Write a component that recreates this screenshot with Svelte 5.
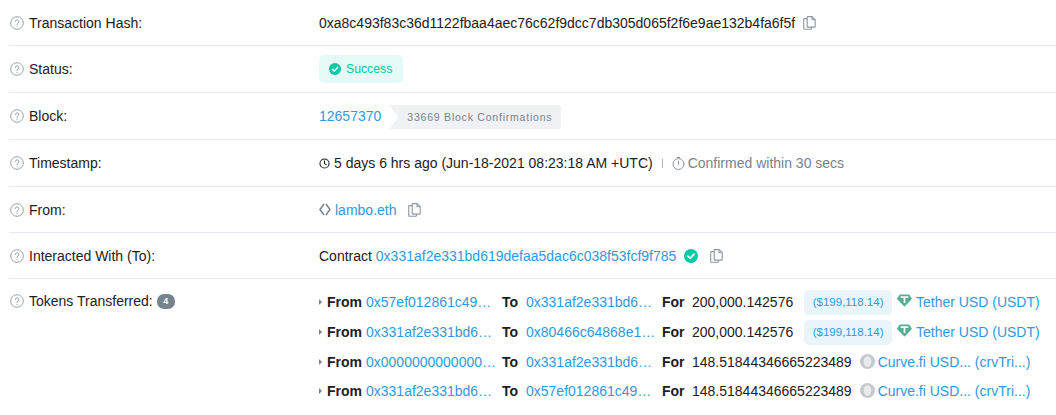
<script lang="ts">
  const transfers = [
    { from: '0x57ef012861c49…', to: '0x331af2e331bd6…', amount: '200,000.142576', usd: '($199,118.14)', token: 'Tether USD (USDT)', kind: 'usdt' },
    { from: '0x331af2e331bd6…', to: '0x80466c64868e1…', amount: '200,000.142576', usd: '($199,118.14)', token: 'Tether USD (USDT)', kind: 'usdt' },
    { from: '0x0000000000000…', to: '0x331af2e331bd6…', amount: '148.51844346665223489', usd: '', token: 'Curve.fi USD... (crvTri...)', kind: 'crv' },
    { from: '0x331af2e331bd6…', to: '0x57ef012861c49…', amount: '148.51844346665223489', usd: '', token: 'Curve.fi USD... (crvTri...)', kind: 'crv' }
  ];
</script>

{#snippet help()}
  <svg class="help" viewBox="0 0 14 14" fill="none" stroke="#8c98a4">
    <circle cx="7" cy="7" r="6.3" stroke-width="0.9" />
    <path d="M5.2 5.6a1.8 1.8 0 1 1 2.7 1.6c-.6.35-.9.7-.9 1.4" stroke-width="0.9" stroke-linecap="round" />
    <circle cx="7" cy="10.3" r="0.55" fill="#8c98a4" stroke="none" />
  </svg>
{/snippet}

{#snippet copy()}
  <svg class="copy" viewBox="0 0 13 14" fill="none" stroke="#8c98a4" stroke-width="1.1" stroke-linejoin="round">
    <path d="M4.2 2.6H1.4a.7.7 0 0 0-.7.7v9.3c0 .4.3.7.7.7h6.4c.4 0 .7-.3.7-.7v-1.4" />
    <path d="M4.2 1.3c0-.4.3-.7.7-.7h4.3l3 3v6.8c0 .4-.3.7-.7.7H4.9a.7.7 0 0 1-.7-.7z" />
    <path d="M9 .8v3h3" />
  </svg>
{/snippet}

{#snippet check(size)}
  <svg class={size} viewBox="0 0 14 14">
    <circle cx="7" cy="7" r="7" fill="#00c9a7" />
    <path d="M3.9 7.2l2.2 2.2 4-4.2" fill="none" stroke="#fff" stroke-width="1.7" stroke-linecap="round" stroke-linejoin="round" />
  </svg>
{/snippet}

<main class="card">
  <div class="row first">
    <div class="label">{@render help()}Transaction Hash:</div>
    <div class="value"><span>0xa8c493f83c36d1122fbaa4aec76c62f9dcc7db305d065f2f6e9ae132b4fa6f5f</span>{@render copy()}</div>
  </div>
  <div class="row">
    <div class="label">{@render help()}Status:</div>
    <div class="value">
      <span class="success">{@render check('check-sm')}Success</span>
    </div>
  </div>
  <div class="row">
    <div class="label">{@render help()}Block:</div>
    <div class="value">
      <a href="#block">12657370</a>
      <span class="confirmations">33669 Block Confirmations</span>
    </div>
  </div>
  <div class="row">
    <div class="label">{@render help()}Timestamp:</div>
    <div class="value">
      <svg class="clock" viewBox="0 0 12 12" fill="none" stroke="#1e2022" stroke-width="1.1" stroke-linecap="round">
        <circle cx="6" cy="6" r="5" />
        <path d="M6 3v3.2l2 1" />
      </svg>
      <span class="time">5 days 6 hrs ago (Jun-18-2021 08:23:18 AM +UTC)</span>
      <span class="sep"></span>
      <svg class="timer" viewBox="0 0 14 14" fill="none" stroke="#77838f" stroke-width="0.9" stroke-linecap="round">
        <circle cx="7" cy="7.6" r="5.9" />
        <path d="M7 4.4v3.4M5.6.6h2.800" />
      </svg>
      <span class="muted">Confirmed within 30 secs</span>
    </div>
  </div>
  <div class="row compact">
    <div class="label">{@render help()}From:</div>
    <div class="value">
      <svg class="ens" viewBox="0 0 12 13" fill="none" stroke="#77838f" stroke-width="1.5">
        <path d="M5 1L1 6.5 5 12M7 1l4 5.500L7 12" />
      </svg>
      <a href="#from" class="ens-name">lambo.eth</a>
      {@render copy()}
    </div>
  </div>
  <div class="row compact">
    <div class="label">{@render help()}Interacted With (To):</div>
    <div class="value">
      <span>Contract&nbsp;</span><a href="#to">0x331af2e331bd619defaa5dac6c038f53fcf9f785</a>
      {@render check('check-lg')}
      {@render copy()}
    </div>
  </div>
  <div class="row tokens">
    <div class="label">{@render help()}Tokens Transferred:<span class="count">4</span></div>
    <div class="transfers">
      {#each transfers as t}
        <div class="transfer" class:priced={t.usd}>
          <span class="caret"></span>
          <b class="from">From</b>
          <a href="#addr" class="addr">{t.from}</a>
          <b class="to">To</b>
          <a href="#addr" class="addr">{t.to}</a>
          <b class="for">For</b>
          <span class="amount">{t.amount}</span>
          {#if t.usd}
            <span class="usd">{t.usd}</span>
          {/if}
          {#if t.kind === 'usdt'}
            <svg class="token usdt" viewBox="0 0 14 12">
              <path d="M3.2.3h7.600c.4 0 .7.2.9.5l2 3c.2.3.2.7-.1 1L7.400 11.400a.6.6 0 0 1-.8 0L.3 4.800c-.3-.3-.3-.7-.1-1l2-3c.2-.3.6-.5 1-.5z" fill="#53ae94" />
              <path d="M3.400 2.800h7.200M7 2.800v5.600" stroke="#fff" stroke-width="1.600" fill="none" />
            </svg>
          {:else}
            <svg class="token crv" viewBox="0 0 14 14">
              <circle cx="7" cy="7" r="7" fill="#c6c9cc" />
              <ellipse cx="7" cy="7" rx="3.600" ry="4.800" fill="#e8eaec" />
            </svg>
          {/if}
          <a href="#token">{t.token}</a>
        </div>
      {/each}
    </div>
  </div>
</main>

<style>
  :global(body) {
    margin: 0;
    background: #fff;
  }

  .card {
    height: 415px;
    overflow: hidden;
    padding-left: 9px;
    box-sizing: border-box;
    font-family: "Liberation Sans", Arial, sans-serif;
    font-size: 14px;
    color: #1e2022;
  }

  a {
    color: #3498db;
    text-decoration: none;
  }

  .row {
    display: flex;
    align-items: center;
    height: 46px;
    border-bottom: 1px solid #e7eaf3;
  }

  .row.first,
  .row.compact {
    height: 45px;
  }

  .label {
    display: flex;
    align-items: center;
    width: 310px;
    flex-shrink: 0;
  }

  .value {
    display: flex;
    align-items: center;
    white-space: nowrap;
  }

  .help {
    width: 14px;
    height: 14px;
    margin: 0 5px 0 1px;
    flex-shrink: 0;
  }

  .copy {
    width: 13px;
    height: 14px;
    margin-left: 8px;
    flex-shrink: 0;
  }

  .success {
    display: flex;
    align-items: center;
    height: 28px;
    padding: 0 11px 0 10px;
    font-size: 12.25px;
    color: #00c9a7;
    background: rgba(0, 201, 167, 0.1);
    border-radius: 5px;
  }

  .check-sm {
    width: 12px;
    height: 12px;
    margin-right: 5px;
  }

  .check-lg {
    width: 14px;
    height: 14px;
    margin-left: 8px;
  }

  .value :global(.check-lg + .copy) {
    margin-left: 12px;
  }

  .confirmations {
    display: flex;
    align-items: center;
    height: 24px;
    margin: 2px 0 0 8px;
    padding: 0 9px 0 18px;
    font-size: 10.5px;
    letter-spacing: 0.78px;
    color: #77838f;
    background: #eff1f4;
    border-radius: 0 3px 3px 0;
    clip-path: polygon(0 0, 100% 0, 100% 100%, 0 100%, 9px 50%);
  }

  .clock {
    width: 11px;
    height: 11px;
    margin-right: 4px;
  }

  .sep {
    width: 1px;
    height: 9px;
    margin: 0 9px;
    background: #a9b1b9;
  }

  .timer {
    width: 13px;
    height: 13px;
    margin-right: 3px;
  }

  .muted {
    color: #77838f;
  }

  .ens {
    width: 12px;
    height: 13px;
    margin-right: 4px;
  }

  .ens-name + :global(.copy) {
    margin-left: 12px;
  }

  .row.tokens {
    align-items: flex-start;
    height: auto;
    border-bottom: 0;
    padding-top: 14px;
  }

  .tokens .label {
    height: 16px;
  }

  .count {
    display: inline-flex;
    align-items: center;
    justify-content: center;
    width: 18px;
    height: 15px;
    margin-left: 4px;
    border-radius: 7px;
    background: #77838f;
    color: #fff;
    font-size: 9px;
    font-weight: 700;
  }

  .transfers {
    margin-top: -6px;
  }

  .transfer {
    display: flex;
    align-items: center;
    height: 29px;
    white-space: nowrap;
  }

  .transfer.priced {
    height: 30px;
  }

  .caret {
    width: 0;
    height: 0;
    margin-right: 5px;
    border-left: 3px solid #77838f;
    border-top: 3px solid transparent;
    border-bottom: 3px solid transparent;
  }

  .from {
    width: 39px;
  }

  .addr {
    width: 136px;
  }

  .to {
    width: 24px;
  }

  .for {
    width: 30px;
  }

  .usd {
    display: flex;
    align-items: center;
    height: 25px;
    margin-left: 11px;
    padding: 0 8.5px;
    font-size: 11.5px;
    color: #3498db;
    background: rgba(52, 152, 219, 0.1);
    border-radius: 5px;
  }

  .token {
    flex-shrink: 0;
  }

  .usdt {
    width: 15px;
    height: 13px;
    margin: -4px 4px 0 5px;
  }

  .crv {
    width: 15px;
    height: 15px;
    margin: -1px 3px 0 8px;
  }
</style>
